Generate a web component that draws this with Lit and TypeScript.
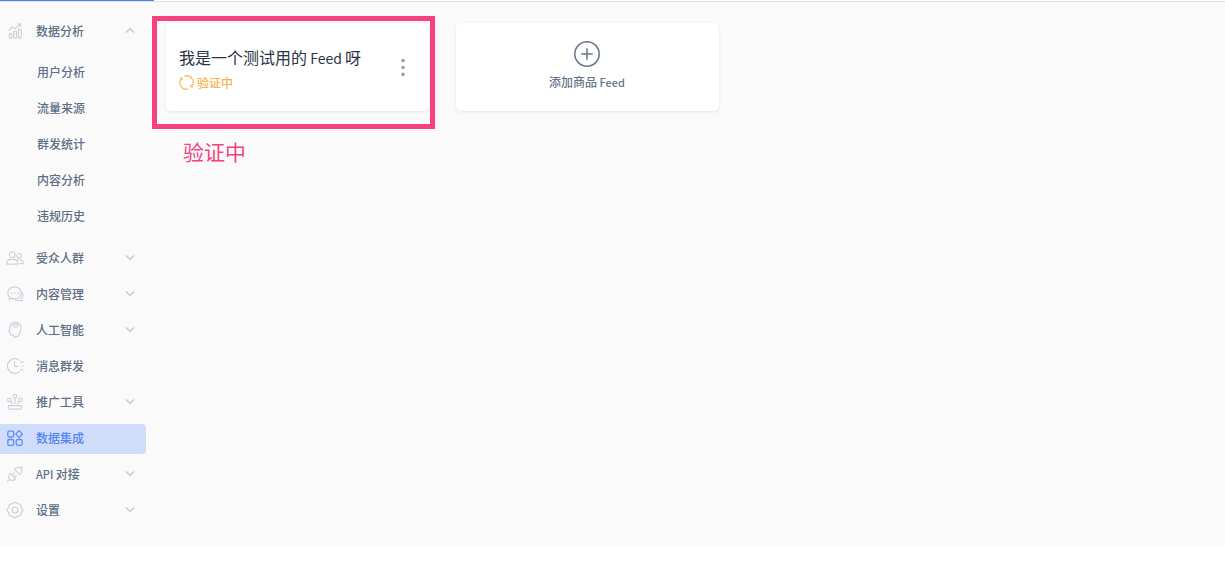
import { LitElement, html, css, svg, nothing } from "lit";
import { customElement, property } from "lit/decorators.js";
import { classMap } from "lit/directives/class-map.js";

interface NavEntry {
  label: string;
  icon: string;
  expandable?: boolean;
  active?: boolean;
  children?: string[];
}

const entries: NavEntry[] = [
  {
    label: "数据分析",
    icon: "chart",
    expandable: true,
    children: ["用户分析", "流量来源", "群发统计", "内容分析", "违规历史"],
  },
  { label: "受众人群", icon: "people", expandable: true },
  { label: "内容管理", icon: "chat", expandable: true },
  { label: "人工智能", icon: "head", expandable: true },
  { label: "消息群发", icon: "clock" },
  { label: "推广工具", icon: "tools", expandable: true },
  { label: "数据集成", icon: "grid", active: true },
  { label: "API 对接", icon: "plug", expandable: true },
  { label: "设置", icon: "gear", expandable: true },
];

const icons: Record<string, unknown> = {
  chart: svg`
    <rect x="3.3" y="11.6" width="2.5" height="4.6" rx=".6"/>
    <rect x="7.7" y="9.3" width="2.8" height="6.9" rx=".6"/>
    <rect x="12.4" y="7.2" width="2.8" height="9" rx=".6"/>
    <path d="M3 8 6 4.8 9 6.9 14.4 2M12 1.8H14.6V4.3"/>`,
  people: svg`
    <circle cx="6.2" cy="5.8" r="2.9"/>
    <path d="M.8 15.2V13.7C.8 11.6 3 10.4 6.2 10.4S11.6 11.6 11.6 13.7V15.2Z"/>
    <circle cx="13.2" cy="6.7" r="2.2"/>
    <path d="M11.6 11C14.8 10.2 17.3 11.7 17.3 13.7V14.7H13.6"/>`,
  chat: svg`
    <path d="M8.6 1.8C12.4 1.8 15.2 4.4 15.2 7.9S12.4 13.9 8.6 13.9C7.6 13.9 6.6 13.7 5.8 13.4L3 14.4 3.8 12.1C2.5 11 1.8 9.5 1.8 7.9 1.8 4.4 4.9 1.8 8.6 1.8Z"/>
    <path d="M16 7.7C17.3 9.6 17 12.2 15.4 13.8L15.9 16 13.4 15.2C11.9 15.7 10.5 15.6 9.4 15"/>
    <path stroke-width="1.5" d="M5.3 7.9H5.7M8.5 7.9H8.9M11.7 7.9H12.1"/>`,
  head: svg`
    <path d="M9.3 1.4C12.8 1.4 14.9 3.2 14.8 6.4 14.8 9.2 14.4 11.4 13.2 12.9L12.8 14.6 8.4 16.5 7.3 14.2H5.4C4.5 14.2 4.2 13.4 4.2 11.2L2.7 10.4 3.9 7.4C3.6 3.4 5.8 1.4 9.3 1.4Z"/>
    <path d="M7 3.4H11.8V5.2C11.2 6.2 7.6 6.2 7 5.2Z"/>`,
  clock: svg`
    <path d="M13.4 14.6A7.3 7.3 0 1 1 13.4 3.4M8.6 4.8V9.4H12"/>
    <path d="M14.6 5.2H17M15.6 9H17.4M14.6 12.8H17"/>`,
  tools: svg`
    <rect x="2.4" y="12.6" width="13" height="3.6" rx=".8"/>
    <circle cx="8.9" cy="3.2" r="1.8"/>
    <circle cx="3.3" cy="6.8" r="1.8"/>
    <circle cx="14.6" cy="6.8" r="1.8"/>
    <path d="M8.9 5.2V10.6M4.8 8.2 6.4 10.6M13.2 8.2 11.4 10.6"/>`,
  grid: svg`
    <rect x="1.8" y="2.1" width="5.9" height="5.9" rx="1.6"/>
    <path d="M13.1 1.6 16.4 5.1 13.1 8.6 9.8 5.1Z"/>
    <rect x="1.8" y="10.5" width="5.9" height="5.9" rx="1.6"/>
    <rect x="10.2" y="10.5" width="5.9" height="5.9" rx="1.6"/>`,
  plug: svg`
    <path d="M1.6 16.4 3.6 14.4M14.8 3.2 16.6 1.4"/>
    <path d="M4.6 8.5 9.7 13.6C8 15.8 5.2 16 3.6 14.4S2.3 10.4 4.6 8.5Z"/>
    <path d="M8.6 4.5 13.7 9.6C16 7.6 16.4 4.8 14.8 3.2S10.4 2.4 8.6 4.5Z"/>
    <path d="M6 9.9 8 7.9M8.3 12.2 10.3 10.2"/>`,
  gear: svg`
    <circle cx="9" cy="9" r="2.9"/>
    <path d="M7.2 2.4Q9 -.2 10.8 2.4L11.6 2.8Q14.7 2.3 14.9 5.3L15.6 6.9Q18.4 9 15.6 11.1L14.9 12.7Q14.7 15.7 11.6 15.2L10.8 15.6Q9 18.2 7.2 15.6L6.4 15.2Q3.3 15.7 3.1 12.7L2.4 11.1Q-.4 9 2.4 6.9L3.1 5.3Q3.3 2.3 6.4 2.8Z"/>`,
};

@customElement("side-nav")
export class SideNav extends LitElement {
  @property({ attribute: false }) entries: NavEntry[] = [];

  static styles = css`
    :host {
      display: block;
    }
    .list,
    .sublist {
      display: flex;
      flex-direction: column;
      gap: 6px;
      margin: 0;
      padding: 0;
      list-style: none;
    }
    .list {
      padding: 15px 0 19px;
    }
    .sublist {
      margin-top: 11px;
      padding-bottom: 6px;
    }
    .row {
      display: flex;
      align-items: center;
      box-sizing: border-box;
      width: 100%;
      height: 30px;
      padding: 0 10px 2px 6px;
      border: 0;
      border-radius: 0 4px 4px 0;
      background: none;
      color: #5f6f85;
      font: inherit;
      font-weight: 500;
      text-align: left;
      text-decoration: none;
      cursor: pointer;
    }
    .icon {
      flex: none;
      width: 18px;
      height: 18px;
      margin-right: 12px;
      fill: none;
      stroke: #ccd3de;
      stroke-width: 1.2;
      stroke-linejoin: round;
      stroke-linecap: round;
    }
    .label {
      flex: 1;
    }
    .latin {
      font-size: 11px;
    }
    .chevron {
      flex: none;
      width: 12px;
      height: 12px;
      fill: none;
      stroke: #bfc3ca;
      stroke-width: 1.1;
    }
    .active {
      background: #d0ddfa;
      color: #5386f5;
    }
    .active .icon {
      stroke: #5b8cf6;
      stroke-width: 1.3;
    }
    .child {
      padding-left: 37px;
    }
  `;

  private row(entry: NavEntry) {
    const [, latin, rest] = entry.label.match(/^([A-Za-z]* ?)(.*)$/)!;
    const content = html`
      <svg class="icon" viewBox="0 0 18 18" aria-hidden="true">${icons[entry.icon]}</svg>
      <span class="label">${latin ? html`<span class="latin">${latin}</span>` : nothing}${rest}</span>
      ${entry.expandable
        ? html`<svg class="chevron" viewBox="0 0 12 12" aria-hidden="true">
            <path d=${entry.children ? "M2 7.5 6 3.5 10 7.5" : "M2 3.5 6 7.5 10 3.5"} />
          </svg>`
        : nothing}
    `;
    return entry.expandable
      ? html`<button class="row" type="button" aria-expanded=${entry.children ? "true" : "false"}>
          ${content}
        </button>`
      : html`<a class=${classMap({ row: true, active: !!entry.active })} href="#">${content}</a>`;
  }

  render() {
    return html`
      <nav aria-label="主导航">
        <ul class="list">
          ${this.entries.map(
            (entry) => html`<li>
              ${this.row(entry)}
              ${entry.children
                ? html`<ul class="sublist">
                    ${entry.children.map(
                      (child) => html`<li><a class="row child" href="#">${child}</a></li>`
                    )}
                  </ul>`
                : nothing}
            </li>`
          )}
        </ul>
      </nav>
    `;
  }
}

@customElement("feed-card")
export class FeedCard extends LitElement {
  @property() status = "";

  static styles = css`
    :host {
      display: flex;
      align-items: center;
      justify-content: space-between;
      box-sizing: border-box;
      padding: 0 15px 0 13px;
      border-radius: 5px;
      background: #fff;
      box-shadow: 0 1px 3px rgba(40, 50, 70, 0.1);
    }
    .info {
      padding-top: 2px;
    }
    .name {
      margin: 0;
      color: #2b3347;
      font-size: 16px;
      font-weight: 400;
      line-height: 24px;
    }
    .status {
      display: flex;
      align-items: center;
      gap: 3px;
      margin: 4px 0 0;
      color: #f9b04d;
      font-weight: 500;
      line-height: 18px;
    }
    .spinner {
      width: 15px;
      height: 15px;
      fill: none;
      stroke: #fbc260;
      stroke-width: 1.3;
    }
    .more {
      display: flex;
      padding: 0;
      border: 0;
      background: none;
      cursor: pointer;
    }
    .dots {
      width: 22px;
      height: 22px;
      fill: #98a1b0;
    }
  `;

  render() {
    return html`
      <div class="info">
        <h2 class="name"><slot></slot></h2>
        <p class="status">
          <svg class="spinner" viewBox="0 0 15 15" aria-hidden="true">
            <path d="M5.6 1.2A6.5 6.5 0 0 1 12.6 11.6M12 9.4V11.9H14" />
            <path d="M9.4 13.8A6.5 6.5 0 0 1 2.4 3.4M3 5.6V3.1H1" />
          </svg>
          ${this.status}
        </p>
      </div>
      <button class="more" type="button" aria-label="更多">
        <svg class="dots" viewBox="0 0 22 22" aria-hidden="true">
          <circle cx="11" cy="4.6" r="1.8" />
          <circle cx="11" cy="11.5" r="1.8" />
          <circle cx="11" cy="18.4" r="1.8" />
        </svg>
      </button>
    `;
  }
}

@customElement("app-root")
export class AppRoot extends LitElement {
  static styles = css`
    :host {
      display: block;
      background: #fff;
      color: #5f6f85;
      font-family: "Noto Sans CJK SC", "Noto Sans", sans-serif;
      font-size: 12px;
      line-height: 18px;
    }
    .topbar {
      height: 2px;
      background: linear-gradient(#fff 1px, #dfe1e4 1px);
      box-shadow: 0 1px 4px rgba(0, 0, 0, 0.08);
    }
    .tab {
      width: 154px;
      height: 1px;
      background: #4a80f0;
    }
    .page {
      display: grid;
      grid-template-columns: 146px 1fr;
      background: #fafafa;
    }
    .main {
      padding: 21px 20px;
    }
    .cards {
      display: grid;
      grid-template-columns: repeat(auto-fill, 263px);
      grid-auto-rows: 88px;
      gap: 27px;
    }
    .slot {
      display: grid;
      position: relative;
    }
    .frame {
      position: absolute;
      inset: -7px -6px -18px -14px;
      border: 5px solid #f6427f;
      pointer-events: none;
    }
    .note {
      position: absolute;
      top: 113px;
      left: 17px;
      margin: 0;
      color: #f6427f;
      font-size: 21px;
      line-height: 30px;
    }
    .title-latin {
      font-size: 14px;
    }
    .label-latin {
      font-size: 11px;
    }
    .add {
      display: flex;
      flex-direction: column;
      align-items: center;
      justify-content: center;
      gap: 5px;
      padding: 0 1px 3px 0;
      border: 0;
      border-radius: 5px;
      background: #fff;
      box-shadow: 0 1px 3px rgba(40, 50, 70, 0.1);
      color: #66758a;
      font: inherit;
      font-weight: 500;
      cursor: pointer;
    }
    .plus {
      width: 28px;
      height: 28px;
      fill: none;
      stroke: #66758a;
      stroke-width: 1.5;
    }
  `;

  render() {
    return html`
      <header class="topbar"><div class="tab"></div></header>
      <div class="page">
        <side-nav .entries=${entries}></side-nav>
        <main class="main">
          <div class="cards">
            <div class="slot">
              <feed-card status="验证中"
                >我是一个测试用的<span class="title-latin"> Feed </span>呀</feed-card
              >
              <div class="frame"></div>
              <p class="note">验证中</p>
            </div>
            <button class="add" type="button">
              <svg class="plus" viewBox="0 0 28 28" aria-hidden="true">
                <circle cx="14" cy="14" r="12.2" />
                <path d="M14 8.2V19.8M8.2 14H19.8" />
              </svg>
              <span>添加商品<span class="label-latin"> Feed</span></span>
            </button>
          </div>
        </main>
      </div>
    `;
  }
}
